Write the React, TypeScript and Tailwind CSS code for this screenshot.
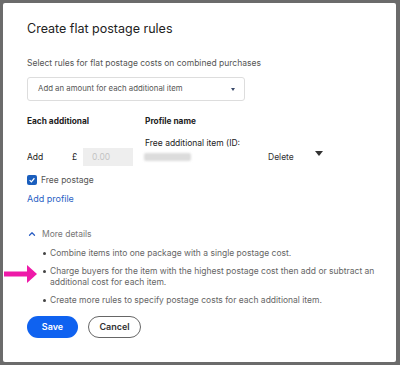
import { ChevronUp } from 'lucide-react';

const bullets = [
  'Combine items into one package with a single postage cost.',
  'Charge buyers for the item with the highest postage cost then add or subtract an additional cost for each item.',
  'Create more rules to specify postage costs for each additional item.',
];

export default function App() {
  return (
    <div className="w-[400px] h-[365px] bg-[#6b6b6b] pt-[3px] pl-[3px] pr-[4px] pb-[3px] font-['Inter',sans-serif]">
      <div className="relative h-full bg-white rounded-[2px] pl-[24px] pr-[18px] pt-[18px] text-[#333]">
        <h2 className="text-[12.5px] leading-[16px] text-[#222]">Create flat postage rules</h2>

        <p className="mt-[20px] text-[8.5px] leading-[12px] text-[#555]">
          Select rules for flat postage costs on combined purchases
        </p>

        <div className="mt-[8px] w-[218px] h-[24px] border border-[#ddd] rounded-[3px] flex items-center justify-between pl-[10px] pr-[9px]">
          <span className="text-[7.8px] text-[#555]">Add an amount for each additional item</span>
          <span className="w-0 h-0 border-l-[2.5px] border-r-[2.5px] border-t-[3px] border-l-transparent border-r-transparent border-t-[#3a4a6a]" />
        </div>

        <div className="mt-[14px] flex text-[8.3px] leading-[12px] font-bold text-[#222]">
          <span className="w-[118px]">Each additional</span>
          <span>Profile name</span>
        </div>

        <div className="mt-[10px] flex">
          <div className="w-[116px] flex items-center pt-[11px] text-[8.5px] text-[#222]">
            <span className="w-[45px]">Add</span>
            <span className="w-[11px]">£</span>
            <span className="w-[50px] h-[18px] bg-[#eee] pl-[9px] flex items-center text-[#c4c4c4]">0.00</span>
          </div>
          <div className="flex flex-col">
            <span className="text-[8.5px] leading-[12px] text-[#222] pl-[2px]">Free additional item (ID:</span>
            <div className="mt-[2px] flex items-start h-[12px]">
              <span className="mt-[2px] ml-[1px] w-[47px] h-[8px] bg-[#dcdcdc] rounded-[2px] blur-[1px]" />
              <span className="ml-[77px] text-[8.5px] leading-[12px] text-[#333]">Delete</span>
              <span className="ml-[21px] w-0 h-0 border-l-[4px] border-r-[4px] border-t-[5px] border-l-transparent border-r-transparent border-t-[#333]" />
            </div>
          </div>
        </div>

        <label className="mt-[8px] flex items-center gap-[4px] text-[8.5px] leading-[12px] text-[#555]">
          <span className="w-[10px] h-[10px] bg-[#1a5ebd] rounded-[2px] flex items-center justify-center">
            <svg viewBox="0 0 10 10" className="w-[8px] h-[8px]">
              <path d="M2 5.2 L4.2 7.3 L8 2.8" stroke="white" strokeWidth="1.5" fill="none" />
            </svg>
          </span>
          Free postage
        </label>

        <div className="mt-[7px] text-[9px] leading-[12px] text-[#2b5fc4]">Add profile</div>

        <div className="mt-[23px] flex items-center gap-[5px] text-[8.5px] leading-[12px] text-[#777]">
          <ChevronUp className="w-[10px] h-[10px] text-[#2b5fc4]" strokeWidth={3} />
          More details
        </div>

        <ul className="mt-[8px] pl-[16px] flex flex-col gap-[7px] text-[8.5px] leading-[11px] text-[#666]">
          {bullets.map((b) => (
            <li key={b} className="relative pl-[7px] list-none">
              <span className="absolute left-0 top-[4px] w-[2.5px] h-[2.5px] rounded-full bg-[#444]" />
              {b}
            </li>
          ))}
        </ul>

        <div className="mt-[10px] flex gap-[10px]">
          <button className="w-[51px] h-[22px] rounded-full bg-[#0f62f0] text-white text-[9px] font-semibold">Save</button>
          <button className="w-[53px] h-[22px] rounded-full border border-[#666] text-[#333] text-[9px] font-semibold">Cancel</button>
        </div>

        <svg className="absolute left-[1px] top-[262px]" width="34" height="19" viewBox="0 0 34 19">
          <rect x="0" y="6.5" width="24" height="5" fill="#ee1aa8" />
          <polygon points="23,0 33,9 23,18" fill="#ee1aa8" />
        </svg>
      </div>
    </div>
  );
}
